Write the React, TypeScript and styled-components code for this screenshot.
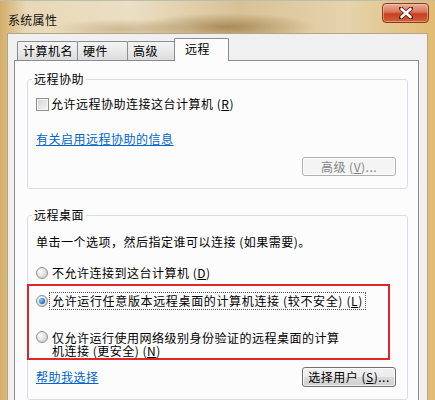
import React from 'react'
import styled, { createGlobalStyle } from 'styled-components'

const GlobalStyle = createGlobalStyle`
  html, body {
    margin: 0;
    padding: 0;
    overflow: hidden;
  }
  body {
    font-family: "Noto Sans CJK SC", "Liberation Sans", sans-serif;
    font-size: 12px;
    color: #000;
  }
`

const Window = styled.div`
  width: 435px;
  height: 400px;
  display: flex;
  flex-direction: column;
  box-sizing: border-box;
  border-top: 1px solid #b9bfae;
  padding: 0 7px;
  background:
    radial-gradient(ellipse 90px 14px at 52% 26px, rgba(130, 92, 35, 0.55), transparent),
    radial-gradient(ellipse 70px 10px at 28% 28px, rgba(150, 110, 50, 0.35), transparent),
    linear-gradient(90deg, #d4ad6a 0%, #e8d8b6 6%, #ebdfc4 30%, #d9c196 55%, #e6d3ac 80%, #e2bb72 100%);
`

const TitleBar = styled.div`
  height: 32px;
  display: flex;
  justify-content: space-between;
  align-items: flex-start;
`

const Title = styled.span`
  margin-top: 12px;
  margin-left: 1px;
  font-size: 12px;
  letter-spacing: 0.3px;
  line-height: 14px;
  color: #111;
`

const CloseButton = styled.div`
  width: 47px;
  height: 20px;
  margin-top: 2px;
  margin-right: -1px;
  box-sizing: border-box;
  border: 1px solid #8a3a22;
  border-radius: 4px;
  background: linear-gradient(180deg, #eab09c 0%, #da7258 45%, #c5401f 55%, #d2603e 100%);
  box-shadow: inset 0 0 0 1px rgba(255, 210, 190, 0.45);
  display: flex;
  align-items: center;
  justify-content: center;
`

const Client = styled.div`
  flex: 1;
  display: flex;
  flex-direction: column;
  background: #f0f0f0;
  border: 1px solid #b5a488;
  border-bottom: none;
  padding: 0 8px 0 6px;
  min-height: 0;
`

const TabStrip = styled.div`
  height: 27px;
  display: flex;
  align-items: flex-end;
  padding-left: 3px;
`

const Tab = styled.div<{ $w: number; $active?: boolean }>`
  position: relative;
  z-index: ${p => (p.$active ? 2 : 1)};
  width: ${p => p.$w}px;
  height: ${p => (p.$active ? 23 : 19)}px;
  margin-right: -1px;
  margin-bottom: ${p => (p.$active ? -1 : 0)}px;
  box-sizing: border-box;
  border: 1px solid #898c95;
  border-bottom: none;
  border-radius: 2px 2px 0 0;
  padding: ${p => (p.$active ? '3px 0 0 10px' : '2px 0 0 5px')};
  font-size: 12px;
  letter-spacing: 0.5px;
  line-height: 14px;
  background: ${p =>
    p.$active ? '#fcfcfc' : 'linear-gradient(180deg, #f4f4f4 0%, #e9e9e9 50%, #dcdcdc 100%)'};
`

const Panel = styled.div`
  flex: 1;
  background: #fcfcfc;
  border: 1px solid #898c95;
  border-bottom: none;
  padding: 11px 10px 0 12px;
`

const Group = styled.fieldset<{ $gap?: number }>`
  margin: ${p => p.$gap ?? 0}px 0 0 0;
  padding: 0 10px 12px 8px;
  border: 1px solid #d5dfe5;
  border-radius: 3px;
  min-width: 0;
`

const Legend = styled.legend`
  margin-left: -4px;
  padding: 0 2px;
  font-size: 12px;
  letter-spacing: 0.5px;
  line-height: 14px;
`

const Row = styled.div<{ $mt: number }>`
  display: flex;
  align-items: center;
  margin-top: ${p => p.$mt}px;
  min-height: 14px;
`

const TopRow = styled(Row)`
  align-items: flex-start;
`

const Text = styled.span`
  font-size: 12px;
  letter-spacing: 0.5px;
  line-height: 14px;
  white-space: nowrap;
`

const WrapText = styled.span`
  font-size: 12px;
  letter-spacing: 0.5px;
  line-height: 13px;
  white-space: nowrap;
`

const FocusText = styled(Text)`
  border: 1px dotted #555;
  padding: 1px 2px;
  margin-left: -3px;
  letter-spacing: 0.65px;
`

const CheckBox = styled.span`
  width: 13px;
  height: 13px;
  box-sizing: border-box;
  border: 1px solid #8f8f8f;
  background: linear-gradient(135deg, #d2d2d2, #f7f7f7);
  box-shadow: inset 0 0 0 1px #f4f4f4;
  margin-right: 2px;
  flex: none;
`

const Radio = styled.span<{ $checked?: boolean }>`
  width: 12px;
  height: 12px;
  box-sizing: border-box;
  border-radius: 50%;
  border: 1px solid #8e8f8f;
  background: radial-gradient(circle at 35% 35%, #fdfdfd, #cfcfcf 80%);
  margin-right: 4px;
  flex: none;
  display: flex;
  align-items: center;
  justify-content: center;

  &::after {
    content: '';
    display: ${p => (p.$checked ? 'block' : 'none')};
    width: 6px;
    height: 6px;
    border-radius: 50%;
    background: radial-gradient(circle at 35% 35%, #8fd0ff, #1c5fb0 75%);
  }
`

const Link = styled.a`
  color: #0066cc;
  text-decoration: underline;
  font-size: 12px;
  letter-spacing: 0.5px;
  line-height: 14px;
  cursor: pointer;
`

const ButtonRow = styled.div<{ $mt: number; $between?: boolean }>`
  display: flex;
  align-items: center;
  justify-content: ${p => (p.$between ? 'space-between' : 'flex-end')};
  margin-top: ${p => p.$mt}px;
`

const Button = styled.button<{ $disabled?: boolean }>`
  width: 94px;
  height: ${p => (p.$disabled ? 19 : 20)}px;
  padding: 0;
  margin-right: 1px;
  border-radius: 3px;
  font-family: "Noto Sans CJK SC", "Liberation Sans", sans-serif;
  font-size: 12px;
  letter-spacing: 0.5px;
  line-height: 14px;
  border: 1px solid ${p => (p.$disabled ? '#adb2b5' : '#707070')};
  color: ${p => (p.$disabled ? '#838383' : '#000')};
  background: ${p =>
    p.$disabled
      ? '#f4f4f4'
      : 'linear-gradient(180deg, #f2f2f2 0%, #ebebeb 50%, #dddddd 51%, #cfcfcf 100%)'};
  box-shadow: inset 0 0 0 1px rgba(255, 255, 255, 0.7);
`

const Highlight = styled.div`
  margin: 4px 0 0 -9px;
  width: 363px;
  box-sizing: border-box;
  border: 2px solid #e0262a;
  padding: 6px 0 1px 7px;
`

const Key = ({ k }: { k: string }) => (
  <>
    (<u>{k}</u>)
  </>
)

export default function App() {
  return (
    <>
      <GlobalStyle />
      <Window>
        <TitleBar>
          <Title>系统属性</Title>
          <CloseButton>
            <svg width="14" height="12" viewBox="0 0 14 12">
              <path d="M2 1.5 L12 10.5 M12 1.5 L2 10.5" stroke="#5a1a0e" strokeWidth="4.2" strokeLinecap="round" />
              <path d="M2.5 2 L11.5 10 M11.5 2 L2.5 10" stroke="#fff" strokeWidth="2.6" strokeLinecap="round" />
            </svg>
          </CloseButton>
        </TitleBar>
        <Client>
          <TabStrip>
            <Tab $w={61}>计算机名</Tab>
            <Tab $w={51}>硬件</Tab>
            <Tab $w={48}>高级</Tab>
            <Tab $w={55} $active>远程</Tab>
          </TabStrip>
          <Panel>
            <Group>
              <Legend>远程协助</Legend>
              <Row $mt={11}>
                <CheckBox />
                <Text>
                  允许远程协助连接这台计算机 <Key k="R" />
                </Text>
              </Row>
              <Row $mt={21}>
                <Link>有关启用远程协助的信息</Link>
              </Row>
              <ButtonRow $mt={11}>
                <Button $disabled>
                  高级 <Key k="V" />...
                </Button>
              </ButtonRow>
            </Group>

            <Group $gap={19}>
              <Legend>远程桌面</Legend>
              <Row $mt={13}>
                <Text>单击一个选项，然后指定谁可以连接 (如果需要)。</Text>
              </Row>
              <Row $mt={17}>
                <Radio />
                <Text>
                  不允许连接到这台计算机 <Key k="D" />
                </Text>
              </Row>
              <Highlight>
                <Row $mt={0}>
                  <Radio $checked />
                  <FocusText>
                    允许运行任意版本远程桌面的计算机连接 (较不安全) <Key k="L" />
                  </FocusText>
                </Row>
                <TopRow $mt={21}>
                  <Radio />
                  <WrapText>
                    仅允许运行使用网络级别身份验证的远程桌面的计算
                    <br />
                    机连接 (更安全) <Key k="N" />
                  </WrapText>
                </TopRow>
              </Highlight>
              <ButtonRow $mt={7} $between>
                <Link>帮助我选择</Link>
                <Button>
                  选择用户 <Key k="S" />...
                </Button>
              </ButtonRow>
            </Group>
          </Panel>
        </Client>
      </Window>
    </>
  )
}
